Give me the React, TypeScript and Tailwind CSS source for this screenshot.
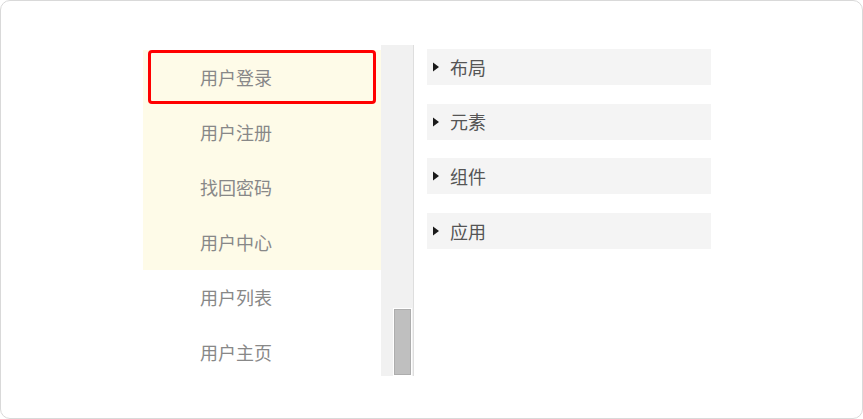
const userItems = ["用户登录", "用户注册", "找回密码", "用户中心", "用户列表", "用户主页"];
const groups = ["布局", "元素", "组件", "应用"];

const font = { fontFamily: '"Noto Sans CJK SC", "Noto Sans", sans-serif' };

function Caret() {
  return (
    <svg width="6" height="10" viewBox="0 0 6 10" className="shrink-0">
      <polygon points="0,0.5 6,5 0,9.5" fill="#1a1a1a" />
    </svg>
  );
}

export default function App() {
  return (
    <div
      className="w-[863px] h-[419px] bg-white border border-[#d9d9d9] rounded-[10px] flex items-start pl-[142px] pt-[44px]"
      style={font}
    >
      {/* user menu with scrollbar */}
      <div className="flex h-[331px] overflow-hidden">
        <div className="w-[238px] pt-[5px] flex flex-col">
          <div className="bg-[#fefbe8] shrink-0">
            <div className="h-[55px] px-[5px] pb-[1px]">
              <div className="h-full border-[3px] border-[#f00] rounded-[4px] flex items-center pl-[49px] text-[18px] text-[#888]">
                {userItems[0]}
              </div>
            </div>
            {userItems.slice(1, 4).map((t) => (
              <div key={t} className="h-[55px] flex items-center pl-[57px] text-[18px] text-[#888]">
                {t}
              </div>
            ))}
          </div>
          {userItems.slice(4).map((t) => (
            <div key={t} className="h-[55px] shrink-0 flex items-center pl-[57px] text-[18px] text-[#888]">
              {t}
            </div>
          ))}
        </div>
        <div className="w-[33px] h-full bg-[#f1f1f1] border-r border-[#dedede] flex flex-col justify-end pl-[12px]">
          <div className="w-[19px] h-[68px] border border-white">
            <div className="w-full h-full bg-[#bfbfbf] border border-[#adadad]" />
          </div>
        </div>
      </div>

      {/* collapsible groups */}
      <div className="ml-[13px] mt-[4px] w-[284px] flex flex-col gap-[18.7px]">
        {groups.map((g) => (
          <div key={g} className="h-[36px] bg-[#f4f4f4] flex items-center pl-[6px] gap-[11px] text-[18px] text-[#555]">
            <Caret />
            <span>{g}</span>
          </div>
        ))}
      </div>
    </div>
  );
}
